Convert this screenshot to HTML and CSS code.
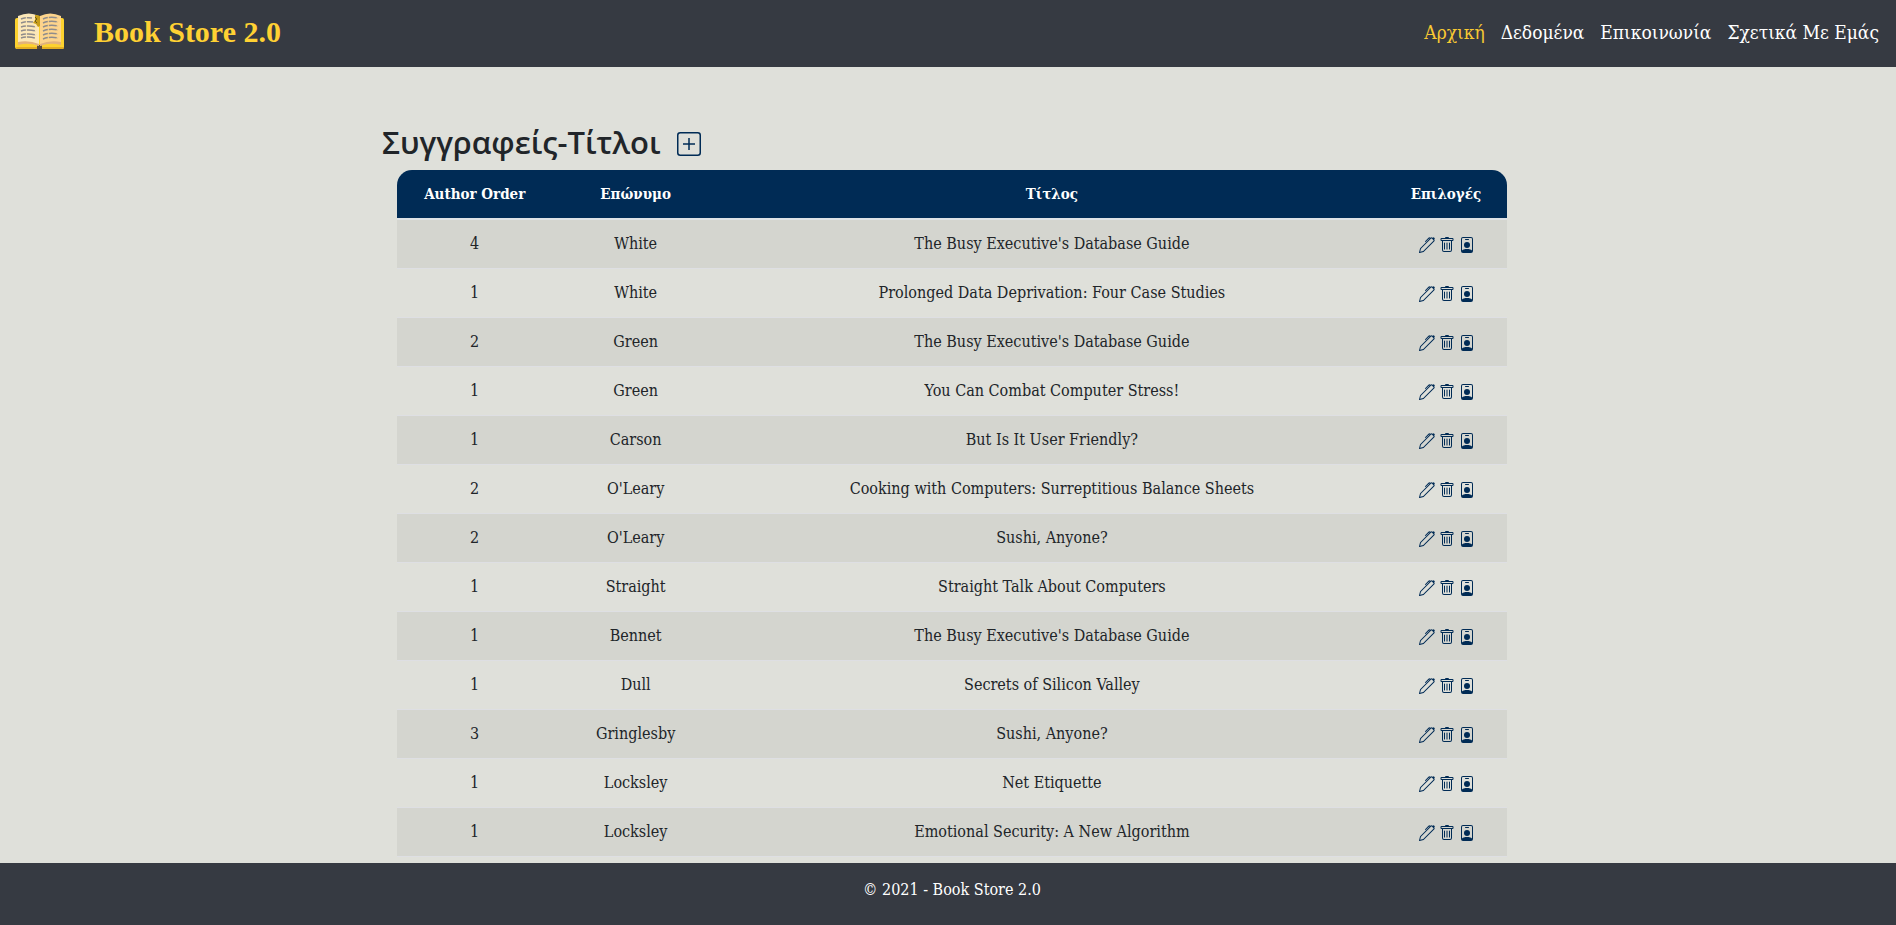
FILE: index.html
```html
<!DOCTYPE html>
<html lang="el">
<head>
<meta charset="utf-8">
<title>Book Store 2.0</title>
<link rel="stylesheet" href="styles.css">
</head>
<body>
<svg class="sprite" aria-hidden="true">
  <symbol id="pen" viewBox="0 0 16 16"><path d="m13.498.795.149-.149a1.207 1.207 0 1 1 1.707 1.708l-.149.148a1.5 1.5 0 0 1-.059 2.059L4.854 14.854a.5.5 0 0 1-.233.131l-4 1a.5.5 0 0 1-.606-.606l1-4a.5.5 0 0 1 .131-.232l9.642-9.642a.5.5 0 0 0-.642.056L6.854 4.854a.5.5 0 1 1-.708-.708L9.44.854A1.5 1.5 0 0 1 11.5.796a1.5 1.5 0 0 1 1.998-.001zm-.644.766a.5.5 0 0 0-.707 0L1.95 11.756l-.764 3.057 3.057-.764L14.44 3.854a.5.5 0 0 0 0-.708l-1.585-1.585z"/></symbol>
  <symbol id="trash" viewBox="0 0 16 16"><path d="M5.500 5.500A.5.5 0 0 1 6 6v6a.5.5 0 0 1-1 0V6a.5.5 0 0 1 .5-.5zm2.500 0a.5.5 0 0 1 .5.5v6a.5.5 0 0 1-1 0V6a.5.5 0 0 1 .5-.5zm3 .5a.5.5 0 0 0-1 0v6a.5.5 0 0 0 1 0V6z"/><path fill-rule="evenodd" d="M14.500 3a1 1 0 0 1-1 1H13v9a2 2 0 0 1-2 2H5a2 2 0 0 1-2-2V4h-.5a1 1 0 0 1-1-1V2a1 1 0 0 1 1-1H6a1 1 0 0 1 1-1h2a1 1 0 0 1 1 1h3.500a1 1 0 0 1 1 1v1zM4.118 4 4 4.059V13a1 1 0 0 0 1 1h6a1 1 0 0 0 1-1V4.059L11.882 4H4.118zM2.500 3V2h11v1h-11z"/></symbol>
  <symbol id="badge" viewBox="0 0 16 16"><path fill-rule="evenodd" d="M4 0h8a2 2 0 0 1 2 2v12a2 2 0 0 1-2 2H4a2 2 0 0 1-2-2V2a2 2 0 0 1 2-2zm0 1a1 1 0 0 0-1 1v11.500C4 12.500 5.500 12 8 12s4 .5 5 1.500V2a1 1 0 0 0-1-1H4z"/><path d="M6.500 2h3a.5.5 0 0 1 0 1h-3a.5.5 0 0 1 0-1z"/><circle cx="8" cy="8" r="3"/></symbol>
</svg>
<header class="navbar">
  <a class="brand" href="#">
    <svg class="logo" viewBox="0 0 50 37" aria-hidden="true">
      <rect x="0" y="5" width="49" height="31" rx="2" fill="#fdd22f"/>
      <path d="M1 34h48v1q0 1-2 1H2z" fill="#e3ae24"/>
      <rect x="22" y="32" width="5" height="4" fill="#5b4b36"/>
      <path d="M3 31V3Q14-2 24 3v30Q14 28 3 31z" fill="#fce8b8"/>
      <path d="M25 33V3Q35-2 46 3v28Q35 28 25 33z" fill="#fdd48c"/>
      <path d="M3 29q11-2 21 2v2Q14 29 3 32zM46 29q-11-2-21 2v2q10-4 21-1z" fill="#e2b27c"/>
      <g fill="none" stroke="#8f8c8c" stroke-width="1.500" stroke-dasharray="5 1 8 1">
        <path d="M6 6q5-2 11-1M6 10q6-2 12-1M6 14q7-2 15 0M6 18q7-2 15 0M6 22q7-2 15 0M6 25q7-2 14 0"/>
        <path d="M28 6q7-3 15-1M28 10q7-3 15-1M28 14q7-3 15-1M28 18q7-3 15-1M28 22q7-3 15-1M28 26q7-3 15-1"/>
      </g>
      <path d="M20 2q3 0 5 1v10l-2 1-2-3-3-1 2-3z" fill="#c79d18"/>
      <path d="m20 4 2 2-2 2 2 2" fill="none" stroke="#6b5a1c"/>
    </svg>
    <span>Book Store 2.0</span>
  </a>
  <nav class="links">
    <a class="active" href="#">Αρχική</a>
    <a href="#">Δεδομένα</a>
    <a href="#">Επικοινωνία</a>
    <a href="#">Σχετικά Με Εμάς</a>
  </nav>
</header>
<main class="container">
  <div class="heading">
    <h2>Συγγραφείς-Τίτλοι</h2>
    <a class="add" href="#" aria-label="Προσθήκη">
      <svg viewBox="0 0 24 24" aria-hidden="true"><rect x=".75" y=".75" width="22.500" height="22.500" rx="2.500"/><path d="M12 6v12M6 12h12"/></svg>
    </a>
  </div>
  <div class="table-wrap">
    <table>
      <colgroup><col class="c-order"><col class="c-name"><col class="c-title"><col class="c-opts"></colgroup>
      <thead><tr><th>Author Order</th><th>Επώνυμο</th><th>Τίτλος</th><th>Επιλογές</th></tr></thead>
      <tbody id="rows"></tbody>
    </table>
  </div>
</main>
<footer class="footer">© 2021 - Book Store 2.0</footer>
<script src="rows.js"></script>
</body>
</html>
```
FILE: styles.css
```css
*, *::before, *::after { box-sizing: border-box; }

body {
  margin: 0;
  min-height: 100vh;
  display: flex;
  flex-direction: column;
  background: #dfe0da;
  color: #212529;
  font-family: "Roboto Slab", "DejaVu Serif Condensed", "DejaVu Serif", serif;
  font-size: 16px;
  line-height: 24px;
}

a { color: inherit; text-decoration: none; }
.sprite { position: absolute; width: 0; height: 0; }

.navbar {
  display: flex;
  align-items: center;
  justify-content: space-between;
  height: 67px;
  padding: 0 17px 4px 15px;
  background: #363a42;
  color: #fff;
}

.brand {
  display: flex;
  align-items: center;
  gap: 29px;
  color: #ffd133;
  font: bold 30px/36px "Liberation Serif", serif;
}

.logo { width: 50px; height: 37px; }
.links { display: flex; gap: 16px; font-size: 19px; }
.links .active { color: #f9c932; }

.container {
  width: 100%;
  max-width: 1148px;
  margin: 0 auto;
  padding: 51px 0 0 8px;
  flex: 1;
}

.heading { display: flex; align-items: center; gap: 16px; height: 48px; }

h2 {
  margin: 0;
  font: 600 31px/38px "Open Sans", sans-serif;
}

.add { display: block; height: 24px; margin-top: 4px; }
.add svg { display: block; width: 24px; height: 24px; fill: none; stroke: #002b55; stroke-width: 1.5; }

.table-wrap { padding: 4px 15px 0; }

table {
  width: 100%;
  table-layout: fixed;
  border-collapse: separate;
  border-spacing: 0;
  text-align: center;
}

.c-order { width: 14%; }
.c-name { width: 15%; }
.c-title { width: 60%; }
.c-opts { width: 11%; }

th {
  padding: 12px;
  background: #002b55;
  border-bottom: 2px solid #dee2e6;
  color: #fff;
  font-size: 15px;
  font-weight: bold;
}
th:first-child { border-top-left-radius: 15px; }
th:last-child { border-top-right-radius: 15px; }

td { padding: 12px; border-bottom: 1px solid #dedfe3; }
tbody tr:nth-child(odd) { background: #d4d5cf; }

.actions { display: flex; justify-content: center; align-items: center; gap: 4px; height: 24px; padding: 2px 0 0 2px; }
.actions a { display: block; height: 16px; }
.actions svg { display: block; width: 16px; height: 16px; fill: #002b55; }

.footer {
  height: 62px;
  padding: 15px 0 0 8px;
  background: #363a42;
  color: #fff;
  text-align: center;
}
```
FILE: rows.js
```js
const titles = [
  [4, "White", "The Busy Executive's Database Guide"],
  [1, "White", "Prolonged Data Deprivation: Four Case Studies"],
  [2, "Green", "The Busy Executive's Database Guide"],
  [1, "Green", "You Can Combat Computer Stress!"],
  [1, "Carson", "But Is It User Friendly?"],
  [2, "O'Leary", "Cooking with Computers: Surreptitious Balance Sheets"],
  [2, "O'Leary", "Sushi, Anyone?"],
  [1, "Straight", "Straight Talk About Computers"],
  [1, "Bennet", "The Busy Executive's Database Guide"],
  [1, "Dull", "Secrets of Silicon Valley"],
  [3, "Gringlesby", "Sushi, Anyone?"],
  [1, "Locksley", "Net Etiquette"],
  [1, "Locksley", "Emotional Security: A New Algorithm"]
];
const action = (icon, label) =>
  `<a href="#" aria-label="${label}"><svg aria-hidden="true"><use href="#${icon}"/></svg></a>`;
const actions = action("pen", "Επεξεργασία") + action("trash", "Διαγραφή") + action("badge", "Λεπτομέρειες");
document.getElementById("rows").innerHTML = titles.map(([order, name, title]) =>
  `<tr><td>${order}</td><td>${name}</td><td>${title}</td><td><div class="actions">${actions}</div></td></tr>`
).join("");
```
